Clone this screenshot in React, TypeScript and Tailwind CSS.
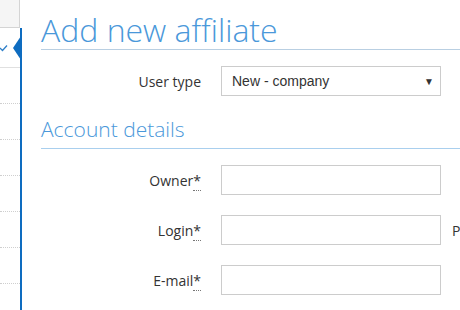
import React from "react";

const Field = ({ label, children }: { label: React.ReactNode; children?: React.ReactNode }) => (
  <div className="flex items-center h-[30px]">
    <div className="w-[160px] text-right text-[14px] text-[#333]">{label}</div>
    <div className="ml-[20px] w-[220px] h-[30px] border border-[#ccc] bg-white">{children}</div>
  </div>
);

const Req = ({ text }: { text: string }) => (
  <span>
    {text}
    <abbr className="no-underline border-b border-dotted border-[#777] [text-decoration:none]">*</abbr>
  </span>
);

export default function App() {
  return (
    <div className="w-[460px] h-[310px] overflow-hidden bg-white flex" style={{ fontFamily: '"Open Sans", sans-serif' }}>
      {/* sidebar */}
      <div className="relative w-[22px] shrink-0 flex flex-col">
        <div className="h-[28px] w-[20px] bg-[#f5f5f5] border-r border-b border-[#d4d4d4]" />
        <div className="flex-1 flex flex-col border-r-2 border-[#0e6cc0]">
          <div className="h-[40px] border-b border-[#e0e0e0] flex items-center">
            <svg width="8" height="8" viewBox="0 0 8 8" className="ml-[0px] mt-[1px]">
              <polyline points="0,4 2.5,6.5 7,1.5" fill="none" stroke="#2f7fc8" strokeWidth="1.3" />
            </svg>
          </div>
          {[0, 1, 2, 3, 4, 5].map((i) => (
            <div key={i} className="h-[36px] border-b border-dotted border-[#cfcfcf]" />
          ))}
        </div>
        <svg className="absolute left-[12px] top-[36px]" width="9" height="24" viewBox="0 0 9 24">
          <polygon points="9,0 1,12 9,24" fill="#0e6cc0" />
        </svg>
      </div>

      {/* main */}
      <div className="flex-1 pl-[19px]">
        <div className="pt-[11px] border-b border-[#b9cfe2] whitespace-nowrap">
          <div className="text-[32px] leading-[38px] font-light text-[#4a98da]">Add new affiliate</div>
        </div>

        <div className="mt-[16px] flex items-center h-[30px]">
          <div className="w-[160px] text-right text-[14px] text-[#333]">User type</div>
          <div
            className="ml-[20px] w-[220px] h-[30px] border border-[#ccc] bg-white flex items-center justify-between pl-[10px] pr-[6px] text-[14px] text-[#333]"
            style={{ fontFamily: '"Liberation Sans", Arial, sans-serif' }}
          >
            <span>New - company</span>
            <span className="text-[10px]">▼</span>
          </div>
        </div>

        <div className="mt-[19px] pb-[5px] border-b border-[#a9cfee] whitespace-nowrap">
          <div className="text-[21px] leading-[28px] font-light text-[#4a98da]">Account details</div>
        </div>

        <div className="mt-[16px] flex flex-col gap-[20px]">
          <Field label={<Req text="Owner" />} />
          <div className="flex items-center whitespace-nowrap">
            <Field label={<Req text="Login" />} />
            <span className="ml-[11px] text-[14px] text-[#333]">Password</span>
          </div>
          <Field label={<Req text="E-mail" />} />
        </div>
      </div>
    </div>
  );
}
